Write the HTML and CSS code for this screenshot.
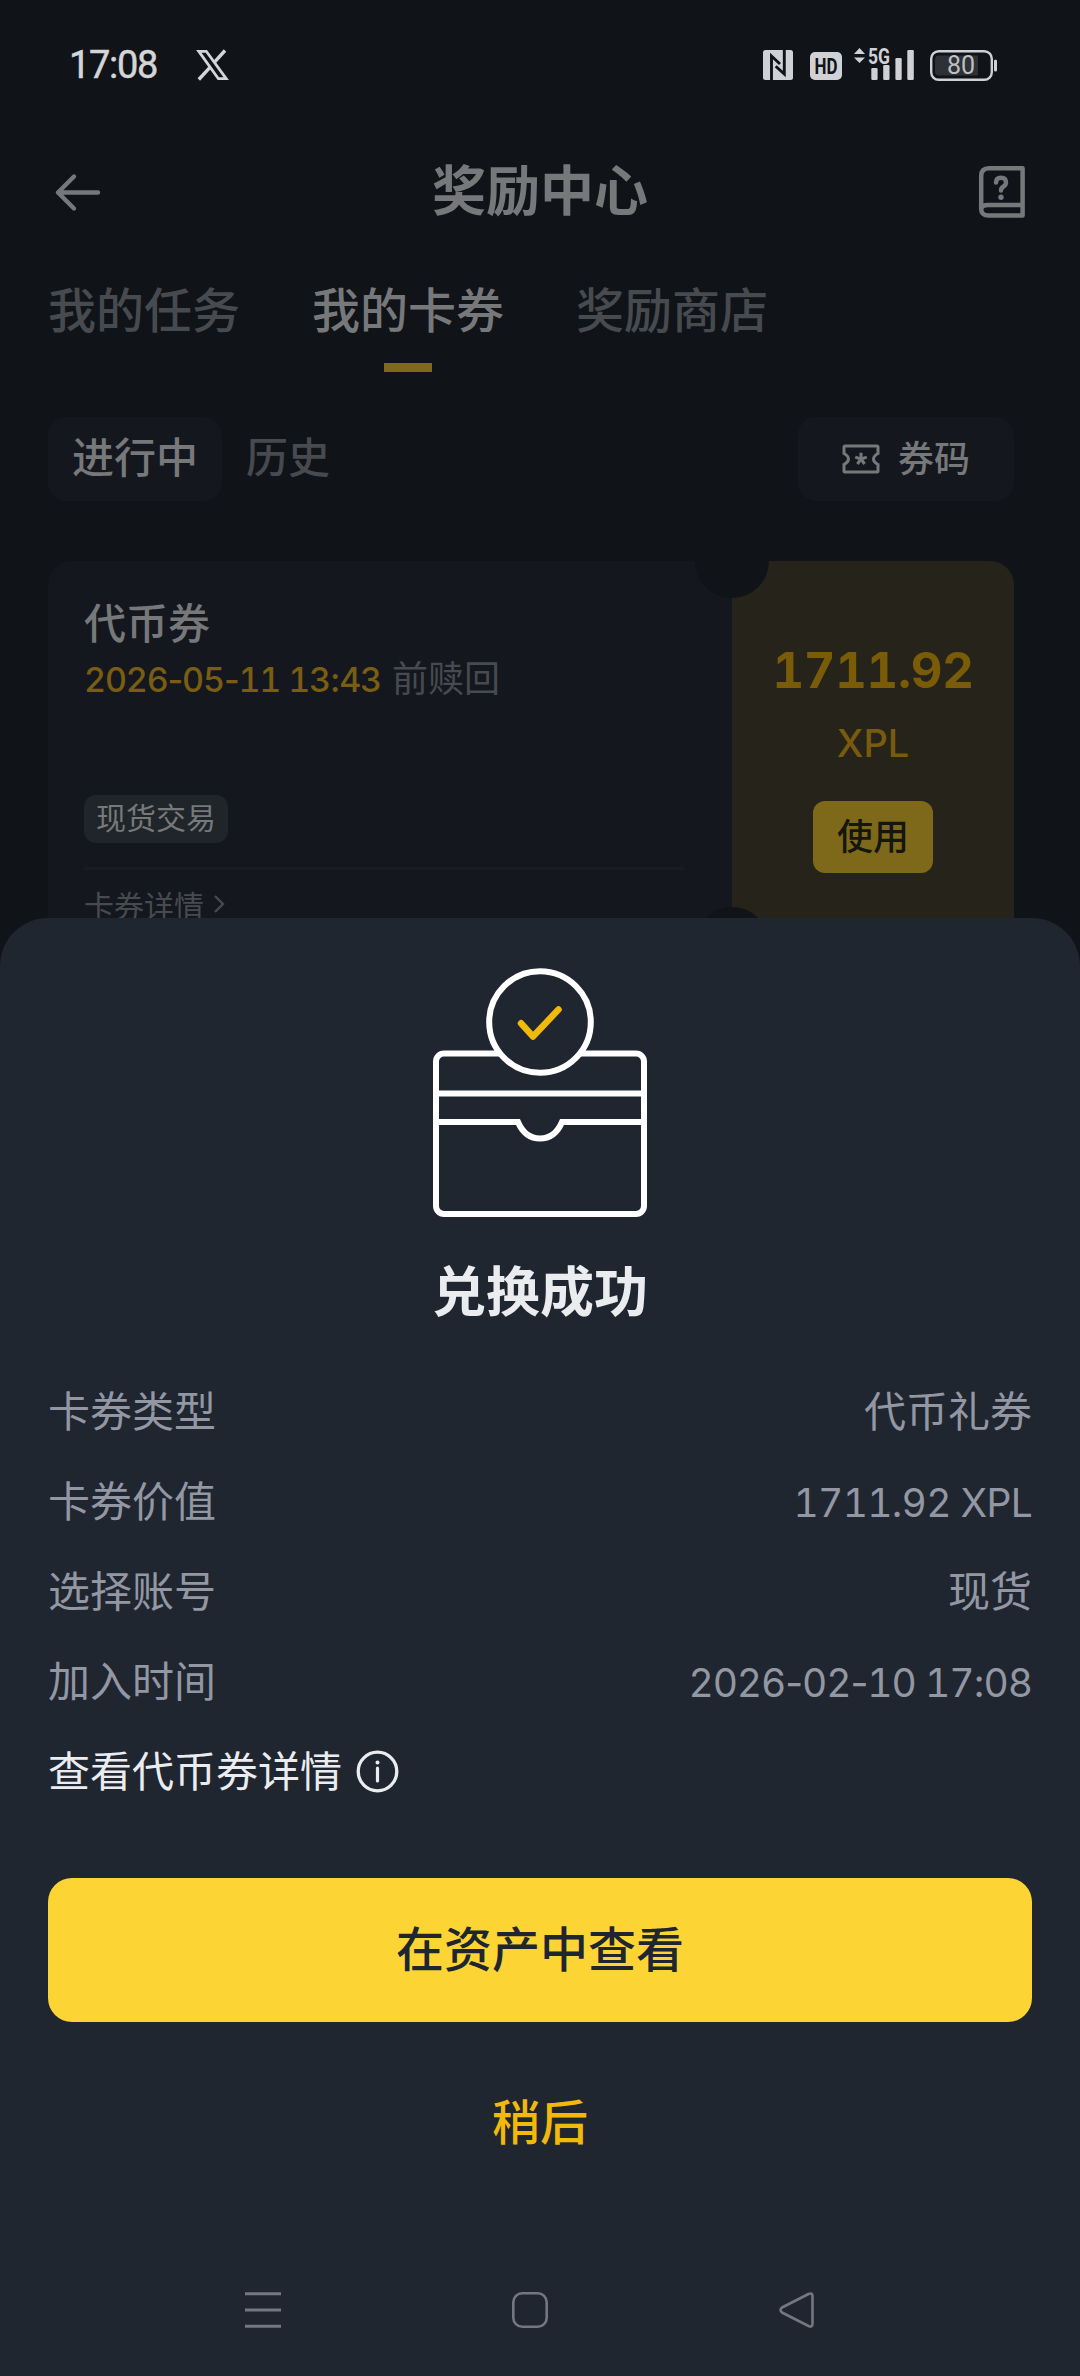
FILE: index.html
```html
<!DOCTYPE html>
<html lang="zh-CN">
<head>
<meta charset="utf-8">
<title>奖励中心</title>
<link rel="stylesheet" href="styles.css">
</head>
<body>
<div class="screen">
  <header class="status">
    <span class="clock">17:08</span>
    <svg class="x-logo" width="31" height="30" viewBox="0 0 31 30"><path fill="none" stroke="#d4d5d7" stroke-width="2.8" d="M1.8 1.3H9.3L29.2 28.7H21.4Z"/><path fill="none" stroke="#d4d5d7" stroke-width="3.4" d="M28 .5 17.3 12.4M13.2 17.2 1.8 29.5"/></svg>
    <div class="status-icons">
      <svg width="30" height="30" viewBox="0 0 30 30"><rect width="30" height="30" rx="2.5" fill="#d0d1d4"/><path d="M8.5 30V6L17 14M21.300 0V24L12.700 16.200" fill="none" stroke="#101318" stroke-width="2.900"/></svg>
      <svg class="hd" width="32" height="30" viewBox="0 0 32 30"><rect y="2" width="32" height="28" rx="5" fill="#d0d1d4"/><text class="hd-text" x="4.500" y="23.6" textLength="23" lengthAdjust="spacingAndGlyphs">HD</text></svg>
      <svg class="signal" width="60" height="33" viewBox="0 0 60 33"><g fill="#d0d1d4"><path d="M0 7 5.5 1 11 7ZM0 10.5H11L5.5 16Z"/><rect x="17.3" y="21" width="6.3" height="12" rx="1.2"/><rect x="29.2" y="18" width="6.3" height="15" rx="1.2"/><rect x="41.4" y="11" width="6.3" height="22" rx="1.2"/><rect x="53.3" y="3" width="6.5" height="30" rx="1.2"/></g><text class="net" x="14" y="16.5" textLength="22" lengthAdjust="spacingAndGlyphs">5G</text></svg>
      <svg class="battery" width="67" height="31" viewBox="0 0 67 31"><rect x="1.2" y="1.2" width="60.6" height="28.6" rx="7.5" fill="none" stroke="#d0d1d4" stroke-width="2.4"/><path d="M9 5.5H48V25.5H9Q5 25.5 5 21.5V9.5Q5 5.5 9 5.5Z" fill="#2e3135"/><rect x="64" y="9.5" width="3" height="12" rx="1.5" fill="#d0d1d4"/><text class="charge" x="31" y="24" text-anchor="middle">80</text></svg>
    </div>
  </header>

  <nav class="titlebar">
    <svg width="46" height="37" viewBox="0 0 46 37"><path d="M43 18.5H3M19 2.5 3 18.5 19 34.5" fill="none" stroke="#76787a" stroke-width="4.4" stroke-linecap="round" stroke-linejoin="round"/></svg>
    <h1 class="page-title">奖励中心</h1>
    <svg class="help" width="46" height="52" viewBox="0 0 46 52"><g fill="none" stroke="#76787a" stroke-width="4.500" stroke-linejoin="round" stroke-linecap="round"><path d="M2.2 43V10Q2.2 2.2 10 2.2H43.6V49.6H9.5Q2.2 49.6 2.2 43 3 39 9 39H43"/><path d="M17 16.5Q17 11.8 22 11.8 27 11.8 27 16.5 27 19 24.5 20.5 22 22 22 24.5"/></g><circle cx="22" cy="31.3" r="2.7" fill="#76787a"/></svg>
  </nav>

  <div class="tabs">
    <span class="tab">我的任务</span>
    <span class="tab tab-active">我的卡券</span>
    <span class="tab">奖励商店</span>
  </div>

  <div class="filters">
    <span class="pill pill-active">进行中</span>
    <span class="pill">历史</span>
    <span class="code-btn">
      <svg width="38" height="30" viewBox="0 0 38 30"><path d="M3 2H35Q36 2 36 3V9.5Q31.5 12 31.5 15T36 20.500V27Q36 28 35 28H3Q2 28 2 27V20.500Q6.500 18 6.500 15T2 9.500V3Q2 2 3 2Z" fill="none" stroke="#76787a" stroke-width="3"/><path d="M19 15V8.800M19 15 13.200 13.100M19 15 24.800 13.100M19 15 15.400 20M19 15 22.600 20" fill="none" stroke="#76787a" stroke-width="3"/></svg>
      <span class="code-label">券码</span>
    </span>
  </div>

  <section class="coupon">
    <div class="coupon-info">
      <h2 class="coupon-name">代币券</h2>
      <p class="expiry"><span class="num expiry-date">2026<span class="sep">-</span>05<span class="sep">-</span>11 13<span class="sep">:</span>43</span><span>前赎回</span></p>
      <span class="tag">现货交易</span>
      <p class="detail-link">卡券详情<svg width="12" height="20" viewBox="0 0 12 20"><path d="M2 2 10 10 2 18" fill="none" stroke="#474a4f" stroke-width="2.400"/></svg></p>
    </div>
    <div class="coupon-value">
      <span class="num amount">1711.92</span>
      <span class="num unit">XPL</span>
      <span class="use-btn">使用</span>
    </div>
    <i class="notch notch-top"></i>
    <i class="notch notch-bottom"></i>
  </section>

  <section class="sheet">
    <svg class="wallet" width="216" height="250" viewBox="0 0 216 250"><g fill="none" stroke="#fff" stroke-width="6"><rect x="4" y="85.500" width="208" height="160.500" rx="8"/><path d="M4 125.500H212M4 154H86Q93 170.500 108 170.500T130 154H212"/><circle cx="108" cy="54" r="50.800" fill="#202630"/></g><path d="M89 55.300 101 68.500 126.500 41.500" fill="none" stroke="#f0b90b" stroke-width="6.500" stroke-linecap="round" stroke-linejoin="round"/></svg>
    <h2 class="sheet-title">兑换成功</h2>
    <dl class="facts">
      <div class="fact"><dt>卡券类型</dt><dd>代币礼券</dd></div>
      <div class="fact"><dt>卡券价值</dt><dd class="num value-amount">1711.92 XPL</dd></div>
      <div class="fact"><dt>选择账号</dt><dd>现货</dd></div>
      <div class="fact"><dt>加入时间</dt><dd class="num value-date">2026<span class="sep">-</span>02<span class="sep">-</span>10 17<span class="sep">:</span>08</dd></div>
    </dl>
    <p class="more">查看代币券详情<svg class="info" width="43" height="43" viewBox="0 0 43 43"><circle cx="21.500" cy="21.500" r="19.300" fill="none" stroke="#eaecef" stroke-width="3.300"/><path d="M21.500 18V31" stroke="#eaecef" stroke-width="3.200" stroke-linecap="round"/><circle cx="21.500" cy="12.500" r="2" fill="#eaecef"/></svg></p>
    <button class="primary">在资产中查看</button>
    <button class="later">稍后</button>
    <div class="navbar">
      <svg width="36" height="36" viewBox="0 0 36 36"><path d="M0 1.700H36M0 18H36M0 34.300H36" stroke="#737780" stroke-width="3"/></svg>
      <svg width="36" height="36" viewBox="0 0 36 36"><rect x="1.300" y="1.300" width="33.400" height="33.400" rx="9" fill="none" stroke="#737780" stroke-width="2.600"/></svg>
      <svg width="36" height="36" viewBox="0 0 36 36"><path d="M3 15.500 29.500 2Q33.500 .500 33.500 4V32Q33.500 35.500 29.500 34L3 20.500Q0 18 3 15.500Z" fill="none" stroke="#737780" stroke-width="2.600" stroke-linejoin="round"/></svg>
    </div>
  </section>
</div>
</body>
</html>
```
FILE: styles.css
```css
* { box-sizing: border-box; margin: 0; padding: 0; }
body {
  background: #101318;
  font-family: "Noto Sans CJK SC", sans-serif;
}
svg { display: block; flex: none; overflow: visible; }
button { border: 0; font-family: inherit; }
.num {
  font-family: Inter, "Noto Sans CJK SC", sans-serif;
  font-feature-settings: "tnum";
}
.sep { font-feature-settings: normal; }
.screen {
  position: relative;
  width: 1080px;
  height: 2376px;
  overflow: hidden;
  background: #101318;
}

/* system status bar */
.status {
  display: flex;
  align-items: center;
  height: 130px;
  padding: 0 83px 0 69px;
}
.clock {
  width: 128px;
  color: #d4d5d7;
  font: 400 38px/1 Roboto, sans-serif;
  letter-spacing: -1.3px;
  -webkit-text-stroke: .5px #d4d5d7;
}
.status-icons { display: flex; align-items: center; margin-left: auto; }
.hd { margin-left: 17px; }
.signal { margin: 0 16px 3px 12px; }
.hd-text { font: 700 22px Roboto, sans-serif; fill: #101318; }
.net { font: 700 22px Roboto, sans-serif; fill: #d0d1d4; }
.charge { font: 400 25px Roboto, sans-serif; fill: #bfc0c3; }

/* page header */
.titlebar {
  display: flex;
  align-items: center;
  justify-content: space-between;
  height: 124px;
  padding: 0 55px;
}
.page-title {
  color: #76787a;
  font-size: 54px;
  font-weight: 700;
  line-height: 80px;
  margin-top: -8px;
}

.tabs {
  display: flex;
  gap: 72px;
  height: 118px;
  padding: 17px 48px 0;
  color: #474a4f;
  font-size: 48px;
  font-weight: 500;
  line-height: 72px;
}
.tab { display: flex; flex-direction: column; align-items: center; }
.tab-active { color: #76787a; }
.tab-active::after {
  content: "";
  width: 48px;
  height: 9px;
  margin-top: 20px;
  background: #7e691b;
}

.filters {
  display: flex;
  margin: 45px 66px 0 48px;
  color: #474a4f;
  font-size: 42px;
  font-weight: 500;
  line-height: 76px;
}
.pill { height: 84px; padding: 0 24px; }
.pill-active {
  border-radius: 18px;
  background: #14171e;
  color: #76787a;
}
.code-btn {
  display: flex;
  align-items: center;
  justify-content: center;
  gap: 18px;
  width: 216px;
  height: 84px;
  margin-left: auto;
  border-radius: 18px;
  background: #14171e;
  color: #76787a;
  font-size: 36px;
}
.code-label { padding-bottom: 7px; }

/* coupon */
.coupon {
  position: relative;
  display: flex;
  height: 383px;
  margin: 60px 66px 0 48px;
  overflow: hidden;
  border-radius: 24px;
}
.coupon-info {
  width: 684px;
  padding: 32px 48px 0 36px;
  background: #14171e;
}
.coupon-name {
  color: #76787a;
  font-size: 42px;
  font-weight: 500;
  line-height: 56px;
}
.expiry {
  display: flex;
  align-items: baseline;
  gap: 11px;
  height: 54px;
  color: #474a4f;
  font-size: 36px;
  line-height: 54px;
}
.expiry-date {
  color: #785d13;
  font-size: 34px;
  font-weight: 500;
  letter-spacing: -1.15px;
}
.tag {
  display: inline-block;
  height: 48px;
  margin-top: 92px;
  padding: 0 12px;
  border-radius: 12px;
  background: #20252a;
  color: #76787a;
  font-size: 30px;
  line-height: 42px;
  vertical-align: top;
}
.detail-link {
  display: flex;
  align-items: center;
  gap: 9px;
  margin-top: 24px;
  padding-top: 11px;
  border-top: 3px solid #191c23;
  color: #474a4f;
  font-size: 30px;
  line-height: 46px;
}
.coupon-value {
  display: flex;
  flex: 1;
  flex-direction: column;
  align-items: center;
  padding-top: 80px;
  background: #26241a;
}
.amount {
  color: #7a5c08;
  font-size: 49px;
  font-weight: 700;
  line-height: 60px;
  letter-spacing: -.3px;
}
.unit {
  margin-top: 18px;
  color: #785b0e;
  font-size: 38px;
  font-weight: 500;
  line-height: 48px;
}
.use-btn {
  width: 120px;
  height: 72px;
  margin-top: 34px;
  border-radius: 12px;
  background: #7e691b;
  color: #15170f;
  font-size: 36px;
  font-weight: 500;
  line-height: 66px;
  text-align: center;
}
.notch {
  position: absolute;
  left: 647px;
  width: 74px;
  height: 74px;
  border-radius: 50%;
  background: #101318;
}
.notch-top { top: -37px; }
.notch-bottom { bottom: -37px; }

/* result sheet */
.sheet {
  position: absolute;
  inset: 918px 0 0;
  display: flex;
  flex-direction: column;
  padding: 50px 48px 24px;
  border-radius: 48px 48px 0 0;
  background: #202630;
  color: #eaecef;
}
.wallet { align-self: center; }
.sheet-title {
  margin-top: 35px;
  font-size: 54px;
  font-weight: 700;
  line-height: 72px;
  text-align: center;
}
.facts { margin-top: 39px; color: #9297a3; }
.fact {
  display: flex;
  justify-content: space-between;
  align-items: baseline;
  height: 90px;
  font-size: 42px;
  line-height: 90px;
}
.value-amount { font-size: 39px; letter-spacing: -.7px; }
.value-date { font-size: 39px; letter-spacing: -1.1px; }
.more {
  display: flex;
  align-items: center;
  gap: 14px;
  height: 90px;
  font-size: 42px;
  line-height: 90px;
}
.info { margin-top: 4px; }
.primary {
  height: 144px;
  margin-top: 64px;
  padding-bottom: 9px;
  border-radius: 24px;
  background: #fcd535;
  color: #202630;
  font-size: 48px;
  font-weight: 500;
}
.later {
  height: 72px;
  margin-top: 61px;
  background: none;
  color: #f0b90b;
  font-size: 48px;
  font-weight: 500;
  line-height: 72px;
}
.navbar {
  display: flex;
  justify-content: space-between;
  align-items: center;
  height: 84px;
  margin-top: auto;
  padding: 0 217px 0 197px;
}
```
